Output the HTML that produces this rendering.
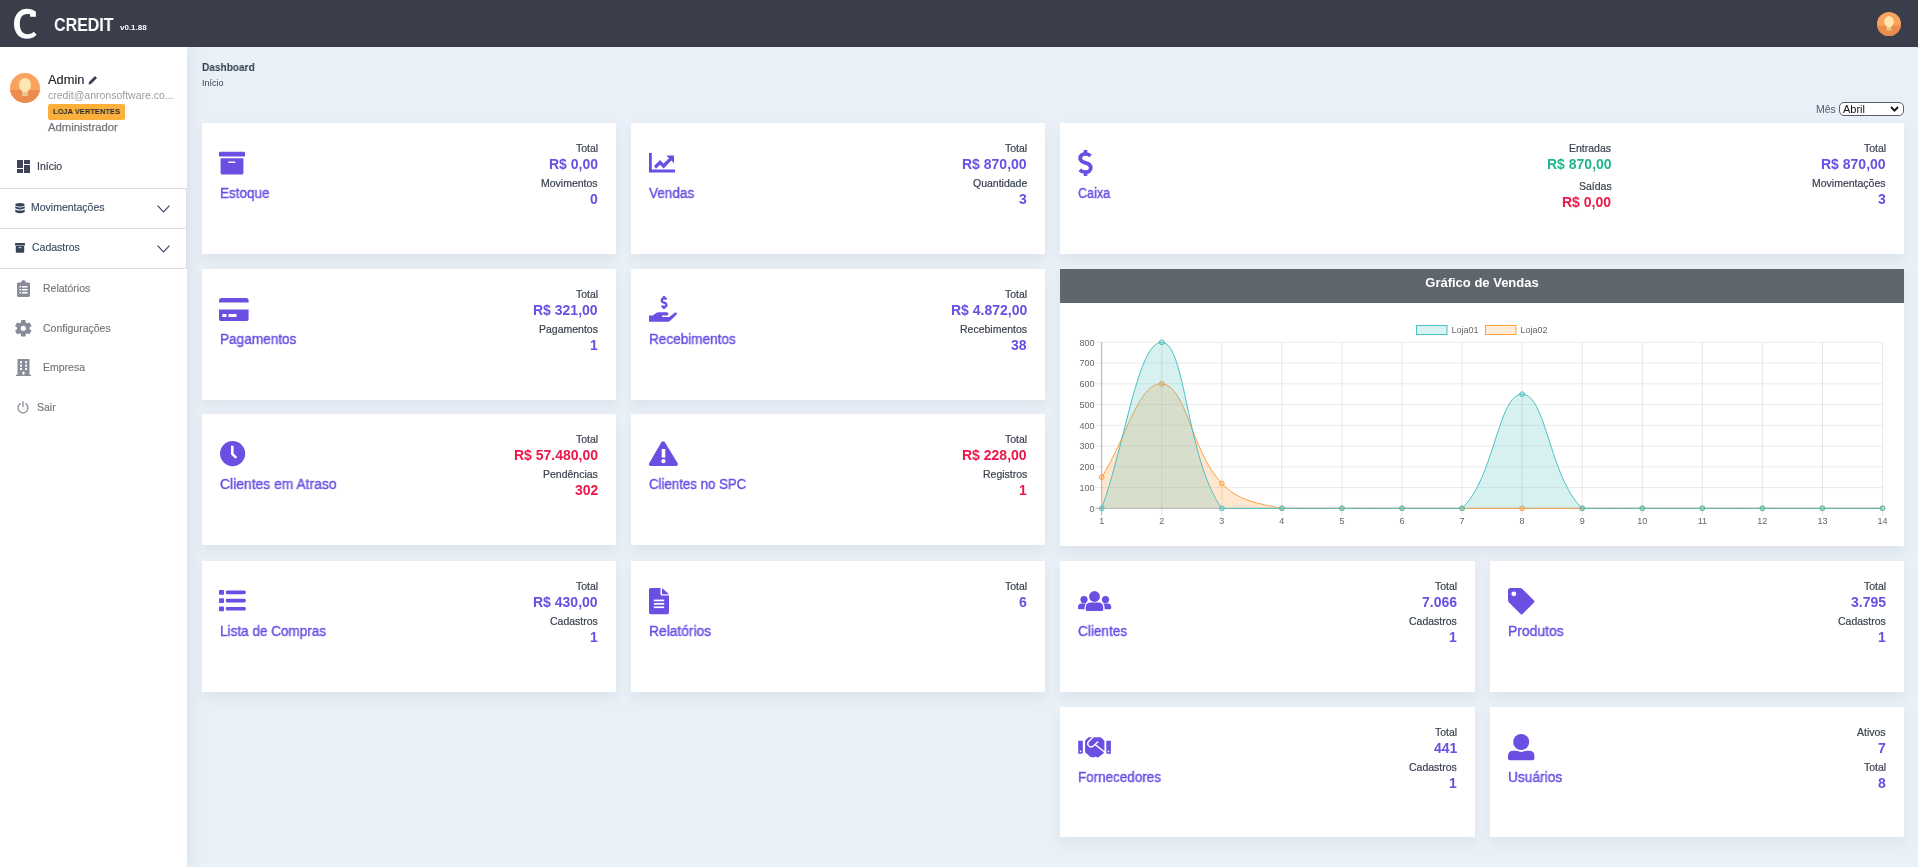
<!DOCTYPE html>
<html><head><meta charset="utf-8"><title>Credit</title><style>
*{margin:0;padding:0;box-sizing:border-box}
html,body{width:1918px;height:867px;overflow:hidden;background:#e9f0f7;font-family:"Liberation Sans",sans-serif}
.t{position:absolute;white-space:nowrap;will-change:transform}
.abs{position:absolute}
.hdr{position:absolute;left:0;top:0;width:1918px;height:47px;background:#3a3e4b}
.side{position:absolute;left:0;top:47px;width:187px;height:820px;background:#fff;box-shadow:2px 0 14px rgba(50,65,85,0.09)}
.card{position:absolute;background:#fff;box-shadow:0 6px 12px rgba(50,70,100,0.07)}
svg{position:absolute;overflow:visible}
</style></head><body>
<div class="hdr"></div>
<svg style="left:0;top:0" width="48" height="47" viewBox="0 0 48 47"><path d="M35.9 11.8 C33.6 9.8 30.6 8.8 27 8.8 C19.2 8.8 14 15 14 23.8 C14 32.8 19.2 38.8 27 38.8 C31 38.8 34.2 37.3 36.6 34.7 L33.8 31.7 C31.8 33.5 29.8 34.2 27.2 34.2 C22.4 34.2 19.8 29.8 19.8 23.8 C19.8 17.6 22.4 13.9 27 13.9 C28.4 13.9 29.3 14 30.1 14.3 L30.1 16.7 L35.9 16.7 Z" fill="#fff"/></svg>
<div class="t" style="left:54px;top:14.92px;font-size:19px;line-height:19px;color:#fff;font-weight:700;transform:scaleX(0.842);transform-origin:0 0;">CREDIT</div>
<div class="t" style="left:120px;top:24.23px;font-size:8px;line-height:8px;color:#fff;font-weight:700;">v0.1.88</div>
<svg style="left:1877px;top:11.5px" width="24" height="24" viewBox="0 0 30 30"><defs><clipPath id="cc1889"><circle cx="15" cy="15" r="15"/></clipPath></defs><g clip-path="url(#cc1889)"><rect width="30" height="30" fill="#f9a35e"/><rect y="17" width="30" height="13" fill="#ec8b4e"/><rect x="12" y="15" width="6" height="8" fill="#e8c98a"/><ellipse cx="15" cy="12" rx="6" ry="7" fill="#fde6b0"/></g></svg>
<div class="side"></div>
<svg style="left:10px;top:73px" width="30" height="30" viewBox="0 0 30 30"><defs><clipPath id="cc25"><circle cx="15" cy="15" r="15"/></clipPath></defs><g clip-path="url(#cc25)"><rect width="30" height="30" fill="#f9a35e"/><rect y="17" width="30" height="13" fill="#ec8b4e"/><rect x="12" y="15" width="6" height="8" fill="#e8c98a"/><ellipse cx="15" cy="12" rx="6" ry="7" fill="#fde6b0"/></g></svg>
<div class="t" style="left:48px;top:74.34px;font-size:12px;line-height:12px;color:#23252e;font-weight:400;transform:scaleX(1.07);transform-origin:0 0;-webkit-text-stroke:0.15px #23252e;">Admin</div>
<svg style="left:88px;top:75px" width="10" height="10" viewBox="0 0 10 10"><path d="M0.5 9.5 L1 7 L7 1 L9 3 L3 9 Z" fill="#3b4154"/></svg>
<div class="t" style="left:48px;top:90.11px;font-size:10.5px;line-height:10.5px;color:#9b9ca3;font-weight:400;">credit@anronsoftware.co...</div>
<div class="abs" style="left:48px;top:104px;width:77px;height:16px;background:#fbb03b;border-radius:2px"></div>
<div class="t" style="left:53px;top:108.23px;font-size:8px;line-height:8px;color:#262a36;font-weight:700;transform:scaleX(0.94);transform-origin:0 0;">LOJA VERTENTES</div>
<div class="t" style="left:48px;top:121.69px;font-size:11px;line-height:11px;color:#75767e;font-weight:400;-webkit-text-stroke:0.25px #75767e;transform:scaleX(1.03);transform-origin:0 0;">Administrador</div>
<svg style="left:17px;top:160px" width="13" height="13" viewBox="0 0 13 13"><rect x="0" y="0" width="6" height="8" fill="#3f4458"/><rect x="0" y="9" width="6" height="4" fill="#3f4458"/><rect x="7" y="0" width="6" height="4" fill="#3f4458"/><rect x="7" y="5" width="6" height="8" fill="#3f4458"/></svg>
<div class="t" style="left:37px;top:161.11px;font-size:10.5px;line-height:10.5px;color:#333848;font-weight:400;-webkit-text-stroke:0.15px #333848;">Início</div>
<div class="abs" style="left:0;top:188px;width:187px;height:1px;background:#dedede"></div>
<div class="abs" style="left:0;top:228px;width:187px;height:1px;background:#dedede"></div>
<div class="abs" style="left:0;top:268px;width:187px;height:1px;background:#dedede"></div>
<div class="abs" style="left:186px;top:188px;width:1px;height:81px;background:#dedede"></div>
<svg style="left:15px;top:202.5px" width="10" height="11" viewBox="0 0 10 11"><ellipse cx="5" cy="1.8" rx="4.7" ry="1.8" fill="#344356"/><path d="M0.3 3.2 Q5 5.6 9.7 3.2 V5.2 Q5 7.6 0.3 5.2Z" fill="#344356"/><path d="M0.3 6.4 Q5 8.8 9.7 6.4 V8.9 Q5 11.6 0.3 8.9Z" fill="#344356"/></svg>
<div class="t" style="left:30.5px;top:202.11px;font-size:10.5px;line-height:10.5px;color:#3c4b60;font-weight:400;-webkit-text-stroke:0.15px #3c4b60;">Movimentações</div>
<svg style="left:157px;top:204.8px" width="13" height="8" viewBox="0 0 13 8"><path d="M0.6 0.6 L6.5 6.8 L12.4 0.6" fill="none" stroke="#3c4b60" stroke-width="1.2"/></svg>
<svg style="left:15px;top:243px" width="10" height="10" viewBox="0 0 10 10"><rect x="0" y="0" width="10" height="2.4" rx="0.4" fill="#344356"/><path d="M0.8 3 H9.2 V9 Q9.2 9.8 8.4 9.8 H1.6 Q0.8 9.8 0.8 9 Z" fill="#344356"/><rect x="3.6" y="4.3" width="2.8" height="0.8" fill="#fff"/></svg>
<div class="t" style="left:32px;top:242.11px;font-size:10.5px;line-height:10.5px;color:#3c4b60;font-weight:400;-webkit-text-stroke:0.15px #3c4b60;">Cadastros</div>
<svg style="left:157px;top:244.8px" width="13" height="8" viewBox="0 0 13 8"><path d="M0.6 0.6 L6.5 6.8 L12.4 0.6" fill="none" stroke="#3c4b60" stroke-width="1.2"/></svg>
<svg style="left:17px;top:280px" width="13" height="17" viewBox="0 0 13 17"><path d="M1.5 2.5 H4 Q4.5 0 6.5 0 Q8.5 0 9 2.5 H11.5 Q13 2.5 13 4 V15.5 Q13 17 11.5 17 H1.5 Q0 17 0 15.5 V4 Q0 2.5 1.5 2.5Z" fill="#898c98"/><g fill="#fff"><rect x="2.5" y="6" width="1.5" height="1.5"/><rect x="5" y="6" width="5.5" height="1.5"/><rect x="2.5" y="9" width="1.5" height="1.5"/><rect x="5" y="9" width="5.5" height="1.5"/><rect x="2.5" y="12" width="1.5" height="1.5"/><rect x="5" y="12" width="5.5" height="1.5"/></g></svg>
<div class="t" style="left:43px;top:283.11px;font-size:10.5px;line-height:10.5px;color:#737579;font-weight:400;-webkit-text-stroke:0.15px #737579;">Relatórios</div>
<svg style="left:15.1px;top:320.2px" width="17" height="17" viewBox="0 0 17 17"><g fill="#898c98"><circle cx="8.3" cy="8.3" r="6.3"/><rect x="6" y="0" width="4.6" height="5" rx="0.6" transform="rotate(0 8.3 8.3)"/><rect x="6" y="0" width="4.6" height="5" rx="0.6" transform="rotate(60 8.3 8.3)"/><rect x="6" y="0" width="4.6" height="5" rx="0.6" transform="rotate(120 8.3 8.3)"/><rect x="6" y="0" width="4.6" height="5" rx="0.6" transform="rotate(180 8.3 8.3)"/><rect x="6" y="0" width="4.6" height="5" rx="0.6" transform="rotate(240 8.3 8.3)"/><rect x="6" y="0" width="4.6" height="5" rx="0.6" transform="rotate(300 8.3 8.3)"/></g><circle cx="8.3" cy="8.3" r="2.6" fill="#fff"/></svg>
<div class="t" style="left:43px;top:323.11px;font-size:10.5px;line-height:10.5px;color:#737579;font-weight:400;-webkit-text-stroke:0.15px #737579;">Configurações</div>
<svg style="left:16px;top:359px" width="15" height="17" viewBox="0 0 15 17"><rect x="1.5" y="0" width="12" height="16" fill="#898c98"/><rect x="0" y="15.6" width="15" height="1.4" fill="#898c98"/><g fill="#fff"><rect x="4" y="2.2" width="2" height="2"/><rect x="9" y="2.2" width="2" height="2"/><rect x="4" y="5.6" width="2" height="2"/><rect x="9" y="5.6" width="2" height="2"/><rect x="4" y="9" width="2" height="2"/><rect x="9" y="9" width="2" height="2"/><rect x="6.5" y="12.6" width="2" height="3"/></g></svg>
<div class="t" style="left:43px;top:362.11px;font-size:10.5px;line-height:10.5px;color:#737579;font-weight:400;-webkit-text-stroke:0.15px #737579;">Empresa</div>
<svg style="left:17px;top:401px" width="12" height="12" viewBox="0 0 12 12"><path d="M3.3 2.6 A5 5 0 1 0 8.7 2.6" fill="none" stroke="#898c98" stroke-width="1.3" stroke-linecap="round"/><line x1="6" y1="0.7" x2="6" y2="5.6" stroke="#898c98" stroke-width="1.3" stroke-linecap="round"/></svg>
<div class="t" style="left:37px;top:402.11px;font-size:10.5px;line-height:10.5px;color:#737579;font-weight:400;-webkit-text-stroke:0.15px #737579;">Sair</div>
<div class="t" style="left:202px;top:62.11px;font-size:10.5px;line-height:10.5px;color:#2f3d4f;font-weight:700;transform:scaleX(0.96);transform-origin:0 0;">Dashboard</div>
<div class="t" style="left:202px;top:79.38px;font-size:9px;line-height:9px;color:#3b3f4e;font-weight:400;">Início</div>
<div class="t" style="right:82px;text-align:right;top:103.81px;font-size:10.5px;line-height:10.5px;color:#4d5b70;font-weight:400;">Mês</div>
<div class="abs" style="left:1839px;top:102px;width:65px;height:14px;border:1px solid #56606b;border-radius:5px;background:#fff"></div>
<div class="t" style="left:1843px;top:103.69px;font-size:11px;line-height:11px;color:#111;font-weight:400;">Abril</div>
<svg style="left:1890px;top:106px" width="9" height="6" viewBox="0 0 9 6"><path d="M1 1 L4.5 4.6 L8 1" fill="none" stroke="#111" stroke-width="1.8"/></svg>
<div class="card" style="left:202px;top:123px;width:414px;height:130.5px"></div>
<svg style="left:219.3px;top:151px" width="27" height="24" viewBox="0 0 27 24"><rect x="0" y="0.8" width="26" height="4.8" rx="1.2" fill="#6a4fe2"/><path d="M1.6 7.2 H24.4 V22 Q24.4 23.6 22.8 23.6 H3.2 Q1.6 23.6 1.6 22 Z" fill="#6a4fe2"/><rect x="9.2" y="10.5" width="7.2" height="1.5" rx="0.7" fill="#fff"/></svg>
<div class="t" style="left:220px;top:186.35px;font-size:14px;line-height:14px;color:#6a4fe2;font-weight:400;-webkit-text-stroke:0.4px #6a4fe2;transform:scaleX(0.9643);transform-origin:0 0;">Estoque</div>
<div class="t" style="right:1320px;text-align:right;top:143.11px;font-size:10.5px;line-height:10.5px;color:#3a4150;font-weight:400;-webkit-text-stroke:0.2px #3a4150;">Total</div>
<div class="t" style="right:1320px;text-align:right;top:156.85px;font-size:14px;line-height:14px;color:#6a4fe2;font-weight:700;">R$ 0,00</div>
<div class="t" style="right:1320px;text-align:right;top:177.51px;font-size:10.5px;line-height:10.5px;color:#3a4150;font-weight:400;-webkit-text-stroke:0.2px #3a4150;">Movimentos</div>
<div class="t" style="right:1320px;text-align:right;top:191.65px;font-size:14px;line-height:14px;color:#6a4fe2;font-weight:700;">0</div>
<div class="card" style="left:631px;top:123px;width:414px;height:130.5px"></div>
<svg style="left:649px;top:153px" width="26" height="20" viewBox="0 0 26 20"><path d="M0 0 H2.8 V16.6 H26 V19.4 H0 Z" fill="#6a4fe2"/><path d="M5 13 L11 7 L14.6 10.6 L20 5.2 L17.4 2.6 H25 V10.2 L22.4 7.6 L14.6 15.4 L11 11.8 L7 15.8 Z" fill="#6a4fe2"/></svg>
<div class="t" style="left:649px;top:186.35px;font-size:14px;line-height:14px;color:#6a4fe2;font-weight:400;-webkit-text-stroke:0.4px #6a4fe2;transform:scaleX(0.9662);transform-origin:0 0;">Vendas</div>
<div class="t" style="right:891px;text-align:right;top:143.11px;font-size:10.5px;line-height:10.5px;color:#3a4150;font-weight:400;-webkit-text-stroke:0.2px #3a4150;">Total</div>
<div class="t" style="right:891px;text-align:right;top:156.85px;font-size:14px;line-height:14px;color:#6a4fe2;font-weight:700;">R$ 870,00</div>
<div class="t" style="right:891px;text-align:right;top:177.51px;font-size:10.5px;line-height:10.5px;color:#3a4150;font-weight:400;-webkit-text-stroke:0.2px #3a4150;">Quantidade</div>
<div class="t" style="right:891px;text-align:right;top:191.65px;font-size:14px;line-height:14px;color:#6a4fe2;font-weight:700;">3</div>
<div class="card" style="left:202px;top:269px;width:414px;height:130.5px"></div>
<svg style="left:219.3px;top:297.6px" width="30" height="23" viewBox="0 0 30 23"><path d="M0 2.5 Q0 0 2.5 0 H27 Q29.6 0 29.6 2.5 V4.6 H0 Z" fill="#6a4fe2"/><path d="M0 11.5 H29.6 V20.4 Q29.6 23 27 23 H2.5 Q0 23 0 20.4 Z" fill="#6a4fe2"/><g fill="#fff"><rect x="3.3" y="16" width="4.2" height="3" rx="0.5"/><rect x="9.5" y="16" width="8" height="3" rx="0.5"/></g></svg>
<div class="t" style="left:220px;top:332.35px;font-size:14px;line-height:14px;color:#6a4fe2;font-weight:400;-webkit-text-stroke:0.4px #6a4fe2;transform:scaleX(0.9720);transform-origin:0 0;">Pagamentos</div>
<div class="t" style="right:1320px;text-align:right;top:289.11px;font-size:10.5px;line-height:10.5px;color:#3a4150;font-weight:400;-webkit-text-stroke:0.2px #3a4150;">Total</div>
<div class="t" style="right:1320px;text-align:right;top:302.85px;font-size:14px;line-height:14px;color:#6a4fe2;font-weight:700;">R$ 321,00</div>
<div class="t" style="right:1320px;text-align:right;top:323.51px;font-size:10.5px;line-height:10.5px;color:#3a4150;font-weight:400;-webkit-text-stroke:0.2px #3a4150;">Pagamentos</div>
<div class="t" style="right:1320px;text-align:right;top:337.65px;font-size:14px;line-height:14px;color:#6a4fe2;font-weight:700;">1</div>
<div class="card" style="left:631px;top:269px;width:414px;height:130.5px"></div>
<svg style="left:649px;top:296px" width="28" height="26" viewBox="0 0 28 26"><path d="M0 19.6 H3.8 L6.8 17.2 Q8 16.2 9.8 16.2 H17.8 Q19.4 16.2 19.4 17.8 Q19.4 19.4 17.8 19.4 H13.4 Q12.2 19.4 13 20.4 Q13.4 21 14.4 21 H20.4 L25.6 16.8 Q26.8 16 27.6 16.8 Q28.4 17.8 27.4 18.8 L21.2 24.8 Q20.2 25.8 19 25.8 H0 Z" fill="#6a4fe2"/><path d="M17.6 3.3 Q16.8 2.4 15.2 2.4 Q12.8 2.4 12.8 4.4 Q12.8 6 15 6.6 Q17.4 7.2 17.4 9 Q17.4 10.8 15 10.8 Q13.6 10.8 12.6 10" fill="none" stroke="#6a4fe2" stroke-width="2.3"/><rect x="13.9" y="0" width="2.2" height="2.6" fill="#6a4fe2"/><rect x="13.9" y="10.4" width="2.2" height="2.6" fill="#6a4fe2"/></svg>
<div class="t" style="left:649px;top:332.35px;font-size:14px;line-height:14px;color:#6a4fe2;font-weight:400;-webkit-text-stroke:0.4px #6a4fe2;transform:scaleX(0.9691);transform-origin:0 0;">Recebimentos</div>
<div class="t" style="right:891px;text-align:right;top:289.11px;font-size:10.5px;line-height:10.5px;color:#3a4150;font-weight:400;-webkit-text-stroke:0.2px #3a4150;">Total</div>
<div class="t" style="right:891px;text-align:right;top:302.85px;font-size:14px;line-height:14px;color:#6a4fe2;font-weight:700;">R$ 4.872,00</div>
<div class="t" style="right:891px;text-align:right;top:323.51px;font-size:10.5px;line-height:10.5px;color:#3a4150;font-weight:400;-webkit-text-stroke:0.2px #3a4150;">Recebimentos</div>
<div class="t" style="right:891px;text-align:right;top:337.65px;font-size:14px;line-height:14px;color:#6a4fe2;font-weight:700;">38</div>
<div class="card" style="left:202px;top:414px;width:414px;height:130.5px"></div>
<svg style="left:219.8px;top:441.2px" width="26" height="26" viewBox="0 0 26 26"><circle cx="12.6" cy="12.6" r="12.6" fill="#6a4fe2"/><path d="M11 4.8 H13.6 V12.6 L17.2 16 L15.4 17.8 L11 13.6 Z" fill="#fff"/></svg>
<div class="t" style="left:220px;top:477.35px;font-size:14px;line-height:14px;color:#6a4fe2;font-weight:400;-webkit-text-stroke:0.4px #6a4fe2;transform:scaleX(0.9922);transform-origin:0 0;">Clientes em Atraso</div>
<div class="t" style="right:1320px;text-align:right;top:434.11px;font-size:10.5px;line-height:10.5px;color:#3a4150;font-weight:400;-webkit-text-stroke:0.2px #3a4150;">Total</div>
<div class="t" style="right:1320px;text-align:right;top:447.85px;font-size:14px;line-height:14px;color:#ec1849;font-weight:700;">R$ 57.480,00</div>
<div class="t" style="right:1320px;text-align:right;top:468.51px;font-size:10.5px;line-height:10.5px;color:#3a4150;font-weight:400;-webkit-text-stroke:0.2px #3a4150;">Pendências</div>
<div class="t" style="right:1320px;text-align:right;top:482.65px;font-size:14px;line-height:14px;color:#ec1849;font-weight:700;">302</div>
<div class="card" style="left:631px;top:414px;width:414px;height:130.5px"></div>
<svg style="left:649px;top:441px" width="30" height="26" viewBox="0 0 30 26"><path d="M14.7 0.6 Q15.3 0 16 0.6 L29.4 22.6 Q30 24.8 28 25 H2.2 Q0 24.8 0.6 22.6 L13.4 0.6 Z" fill="#6a4fe2" transform="translate(-0.6 0)"/><rect x="12.7" y="8" width="3.6" height="8.5" rx="0.5" fill="#fff"/><circle cx="14.5" cy="20.2" r="2.1" fill="#fff"/></svg>
<div class="t" style="left:649px;top:477.35px;font-size:14px;line-height:14px;color:#6a4fe2;font-weight:400;-webkit-text-stroke:0.4px #6a4fe2;transform:scaleX(0.9469);transform-origin:0 0;">Clientes no SPC</div>
<div class="t" style="right:891px;text-align:right;top:434.11px;font-size:10.5px;line-height:10.5px;color:#3a4150;font-weight:400;-webkit-text-stroke:0.2px #3a4150;">Total</div>
<div class="t" style="right:891px;text-align:right;top:447.85px;font-size:14px;line-height:14px;color:#ec1849;font-weight:700;">R$ 228,00</div>
<div class="t" style="right:891px;text-align:right;top:468.51px;font-size:10.5px;line-height:10.5px;color:#3a4150;font-weight:400;-webkit-text-stroke:0.2px #3a4150;">Registros</div>
<div class="t" style="right:891px;text-align:right;top:482.65px;font-size:14px;line-height:14px;color:#ec1849;font-weight:700;">1</div>
<div class="card" style="left:202px;top:561px;width:414px;height:130.5px"></div>
<svg style="left:219px;top:590px" width="27" height="22" viewBox="0 0 27 22"><g fill="#6a4fe2"><rect x="0" y="0" width="5" height="4.8" rx="0.8"/><rect x="6.8" y="0.6" width="20" height="3.6" rx="1.4"/><rect x="0" y="8.2" width="5" height="4.8" rx="0.8"/><rect x="6.8" y="8.8" width="20" height="3.6" rx="1.4"/><rect x="0" y="16.4" width="5" height="4.8" rx="0.8"/><rect x="6.8" y="17" width="20" height="3.6" rx="1.4"/></g></svg>
<div class="t" style="left:220px;top:624.35px;font-size:14px;line-height:14px;color:#6a4fe2;font-weight:400;-webkit-text-stroke:0.4px #6a4fe2;transform:scaleX(0.9662);transform-origin:0 0;">Lista de Compras</div>
<div class="t" style="right:1320px;text-align:right;top:581.11px;font-size:10.5px;line-height:10.5px;color:#3a4150;font-weight:400;-webkit-text-stroke:0.2px #3a4150;">Total</div>
<div class="t" style="right:1320px;text-align:right;top:594.85px;font-size:14px;line-height:14px;color:#6a4fe2;font-weight:700;">R$ 430,00</div>
<div class="t" style="right:1320px;text-align:right;top:615.51px;font-size:10.5px;line-height:10.5px;color:#3a4150;font-weight:400;-webkit-text-stroke:0.2px #3a4150;">Cadastros</div>
<div class="t" style="right:1320px;text-align:right;top:629.65px;font-size:14px;line-height:14px;color:#6a4fe2;font-weight:700;">1</div>
<div class="card" style="left:631px;top:561px;width:414px;height:130.5px"></div>
<svg style="left:649px;top:588px" width="21" height="27" viewBox="0 0 21 27"><path d="M1.5 0 H11.5 V6.6 Q11.5 7.4 12.3 7.4 H20 V24.6 Q20 26.2 18.4 26.2 H1.5 Q0 26.2 0 24.6 V1.5 Q0 0 1.5 0 Z" fill="#6a4fe2"/><path d="M13 0 L20 6.2 H13 Z" fill="#6a4fe2"/><g fill="#fff"><rect x="4.8" y="11.6" width="10.4" height="1.7"/><rect x="4.8" y="15" width="10.4" height="1.7"/><rect x="4.8" y="18.4" width="10.4" height="1.7"/></g></svg>
<div class="t" style="left:649px;top:624.35px;font-size:14px;line-height:14px;color:#6a4fe2;font-weight:400;-webkit-text-stroke:0.4px #6a4fe2;transform:scaleX(0.9855);transform-origin:0 0;">Relatórios</div>
<div class="t" style="right:891px;text-align:right;top:581.11px;font-size:10.5px;line-height:10.5px;color:#3a4150;font-weight:400;-webkit-text-stroke:0.2px #3a4150;">Total</div>
<div class="t" style="right:891px;text-align:right;top:594.85px;font-size:14px;line-height:14px;color:#6a4fe2;font-weight:700;">6</div>
<div class="card" style="left:1060px;top:561px;width:415px;height:130.5px"></div>
<svg style="left:1078px;top:591px" width="34" height="21" viewBox="0 0 34 21"><g fill="#6a4fe2"><circle cx="16.5" cy="5.5" r="5.4"/><circle cx="6" cy="8.6" r="3.6"/><circle cx="27.5" cy="8.6" r="3.6"/><path d="M7.8 16.2 Q7.8 11.5 12.8 11.5 H20.2 Q25.2 11.5 25.2 16.2 V18.8 Q25.2 20.1 23.8 20.1 H9.2 Q7.8 20.1 7.8 18.8 Z"/><path d="M0 16 Q0 12.4 3.6 12.4 H8 Q6.6 14 6.6 16.5 V18.2 H1.2 Q0 18.2 0 17 Z"/><path d="M33.2 16 Q33.2 12.4 29.6 12.4 H25.2 Q26.6 14 26.6 16.5 V18.2 H32 Q33.2 18.2 33.2 17 Z"/></g></svg>
<div class="t" style="left:1078px;top:624.35px;font-size:14px;line-height:14px;color:#6a4fe2;font-weight:400;-webkit-text-stroke:0.4px #6a4fe2;transform:scaleX(0.9720);transform-origin:0 0;">Clientes</div>
<div class="t" style="right:461px;text-align:right;top:581.11px;font-size:10.5px;line-height:10.5px;color:#3a4150;font-weight:400;-webkit-text-stroke:0.2px #3a4150;">Total</div>
<div class="t" style="right:461px;text-align:right;top:594.85px;font-size:14px;line-height:14px;color:#6a4fe2;font-weight:700;">7.066</div>
<div class="t" style="right:461px;text-align:right;top:615.51px;font-size:10.5px;line-height:10.5px;color:#3a4150;font-weight:400;-webkit-text-stroke:0.2px #3a4150;">Cadastros</div>
<div class="t" style="right:461px;text-align:right;top:629.65px;font-size:14px;line-height:14px;color:#6a4fe2;font-weight:700;">1</div>
<div class="card" style="left:1490px;top:561px;width:414px;height:130.5px"></div>
<svg style="left:1507.5px;top:588px" width="27" height="27" viewBox="0 0 27 27"><path d="M0 2.6 Q0 0 2.6 0 H12 Q13.4 0 14.4 1 L26 12.6 Q27 13.6 26 14.6 L14.6 26 Q13.6 27 12.6 26 L1 14.4 Q0 13.4 0 12 Z" fill="#6a4fe2"/><circle cx="5.8" cy="5.8" r="2.4" fill="#fff"/></svg>
<div class="t" style="left:1508px;top:624.35px;font-size:14px;line-height:14px;color:#6a4fe2;font-weight:400;-webkit-text-stroke:0.4px #6a4fe2;transform:scaleX(0.9932);transform-origin:0 0;">Produtos</div>
<div class="t" style="right:32px;text-align:right;top:581.11px;font-size:10.5px;line-height:10.5px;color:#3a4150;font-weight:400;-webkit-text-stroke:0.2px #3a4150;">Total</div>
<div class="t" style="right:32px;text-align:right;top:594.85px;font-size:14px;line-height:14px;color:#6a4fe2;font-weight:700;">3.795</div>
<div class="t" style="right:32px;text-align:right;top:615.51px;font-size:10.5px;line-height:10.5px;color:#3a4150;font-weight:400;-webkit-text-stroke:0.2px #3a4150;">Cadastros</div>
<div class="t" style="right:32px;text-align:right;top:629.65px;font-size:14px;line-height:14px;color:#6a4fe2;font-weight:700;">1</div>
<div class="card" style="left:1060px;top:707px;width:415px;height:130px"></div>
<svg style="left:1078px;top:736.8px" width="34" height="22" viewBox="0 0 34 22"><g fill="#6a4fe2"><path d="M0.2 3.7 H4.8 V15.6 Q4.8 16.8 3.6 16.8 H0.2 Z"/><path d="M32.9 3.7 H28.3 V15.6 Q28.3 16.8 29.5 16.8 H32.9 Z"/><path d="M7.1 3.4 L10.6 0.3 H22.7 L26.4 3.8 V13.4 L25.6 16.2 L24 17.4 L22.4 18.8 L20.6 20.2 H18.6 L17.6 19.6 L16.6 20.2 H12.8 L7.1 15.2 Z"/></g><g fill="none" stroke="#fff" stroke-width="1.4"><path d="M15.2 0 L10.8 4.2 Q8.8 6.4 10.4 8.6 Q12.4 10.8 14.8 9.4 L20.2 4.4"/><path d="M17.2 7.6 L26.6 15"/></g><g fill="#fff"><circle cx="2.6" cy="14.3" r="0.9"/><circle cx="30.5" cy="14.3" r="0.9"/></g></svg>
<div class="t" style="left:1078px;top:770.35px;font-size:14px;line-height:14px;color:#6a4fe2;font-weight:400;-webkit-text-stroke:0.4px #6a4fe2;transform:scaleX(0.9595);transform-origin:0 0;">Fornecedores</div>
<div class="t" style="right:461px;text-align:right;top:727.11px;font-size:10.5px;line-height:10.5px;color:#3a4150;font-weight:400;-webkit-text-stroke:0.2px #3a4150;">Total</div>
<div class="t" style="right:461px;text-align:right;top:740.85px;font-size:14px;line-height:14px;color:#6a4fe2;font-weight:700;">441</div>
<div class="t" style="right:461px;text-align:right;top:761.51px;font-size:10.5px;line-height:10.5px;color:#3a4150;font-weight:400;-webkit-text-stroke:0.2px #3a4150;">Cadastros</div>
<div class="t" style="right:461px;text-align:right;top:775.65px;font-size:14px;line-height:14px;color:#6a4fe2;font-weight:700;">1</div>
<div class="card" style="left:1490px;top:707px;width:414px;height:130px"></div>
<svg style="left:1507.5px;top:734px" width="27" height="26" viewBox="0 0 27 26"><path d="M0 22.2 Q0 16.8 5.4 16.8 H21 Q26.4 16.8 26.4 22.2 V24.4 Q26.4 26.2 24.6 26.2 H1.8 Q0 26.2 0 24.4 Z" fill="#6a4fe2"/><circle cx="13.2" cy="8" r="9.9" fill="#fff"/><circle cx="13.2" cy="8" r="8" fill="#6a4fe2"/></svg>
<div class="t" style="left:1508px;top:770.35px;font-size:14px;line-height:14px;color:#6a4fe2;font-weight:400;-webkit-text-stroke:0.4px #6a4fe2;transform:scaleX(0.9807);transform-origin:0 0;">Usuários</div>
<div class="t" style="right:32px;text-align:right;top:727.11px;font-size:10.5px;line-height:10.5px;color:#3a4150;font-weight:400;-webkit-text-stroke:0.2px #3a4150;">Ativos</div>
<div class="t" style="right:32px;text-align:right;top:740.85px;font-size:14px;line-height:14px;color:#6a4fe2;font-weight:700;">7</div>
<div class="t" style="right:32px;text-align:right;top:761.51px;font-size:10.5px;line-height:10.5px;color:#3a4150;font-weight:400;-webkit-text-stroke:0.2px #3a4150;">Total</div>
<div class="t" style="right:32px;text-align:right;top:775.65px;font-size:14px;line-height:14px;color:#6a4fe2;font-weight:700;">8</div>
<div class="card" style="left:1060px;top:123px;width:844px;height:130.5px"></div>
<svg style="left:1078px;top:150px" width="15" height="26" viewBox="0 0 15 26"><path d="M12.6 5.8 C11 4.3 9.5 3.8 7.5 3.8 C4.4 3.8 2.2 5.6 2.2 8.2 C2.2 11 4.6 12 7.5 12.8 C10.5 13.6 12.8 14.8 12.8 17.8 C12.8 20.4 10.5 22.2 7.5 22.2 C5.2 22.2 3.6 21.6 1.8 19.8" fill="none" stroke="#6a4fe2" stroke-width="3.8"/><rect x="5.7" y="0" width="3.6" height="4" fill="#6a4fe2"/><rect x="5.7" y="22" width="3.6" height="4" fill="#6a4fe2"/></svg>
<div class="t" style="left:1078px;top:186.35px;font-size:14px;line-height:14px;color:#6a4fe2;font-weight:400;-webkit-text-stroke:0.4px #6a4fe2;transform:scaleX(0.900);transform-origin:0 0;">Caixa</div>
<div class="t" style="right:306.5px;text-align:right;top:143.11px;font-size:10.5px;line-height:10.5px;color:#3a4150;font-weight:400;-webkit-text-stroke:0.2px #3a4150;">Entradas</div>
<div class="t" style="right:306.5px;text-align:right;top:156.85px;font-size:14px;line-height:14px;color:#22b591;font-weight:700;">R$ 870,00</div>
<div class="t" style="right:306.5px;text-align:right;top:181.11px;font-size:10.5px;line-height:10.5px;color:#3a4150;font-weight:400;-webkit-text-stroke:0.2px #3a4150;">Saídas</div>
<div class="t" style="right:306.5px;text-align:right;top:194.65px;font-size:14px;line-height:14px;color:#ec1849;font-weight:700;">R$ 0,00</div>
<div class="t" style="right:32px;text-align:right;top:143.11px;font-size:10.5px;line-height:10.5px;color:#3a4150;font-weight:400;-webkit-text-stroke:0.2px #3a4150;">Total</div>
<div class="t" style="right:32px;text-align:right;top:156.85px;font-size:14px;line-height:14px;color:#6a4fe2;font-weight:700;">R$ 870,00</div>
<div class="t" style="right:32px;text-align:right;top:178.11px;font-size:10.5px;line-height:10.5px;color:#3a4150;font-weight:400;-webkit-text-stroke:0.2px #3a4150;">Movimentações</div>
<div class="t" style="right:32px;text-align:right;top:191.65px;font-size:14px;line-height:14px;color:#6a4fe2;font-weight:700;">3</div>
<div class="card" style="left:1060px;top:269px;width:844px;height:277px"></div>
<div class="abs" style="left:1060px;top:269px;width:844px;height:34px;background:#5f666e"></div>
<div class="t" style="left:1182px;width:600px;text-align:center;top:275.60px;font-size:13px;line-height:13px;color:#fff;font-weight:700;">Gráfico de Vendas</div>
<svg style="left:0;top:0" width="1918" height="867" viewBox="0 0 1918 867"><line x1="1095.2" y1="508.30" x2="1882.5" y2="508.30" stroke="rgba(0,0,0,0.08)" stroke-width="1"/><line x1="1095.2" y1="487.55" x2="1882.5" y2="487.55" stroke="rgba(0,0,0,0.08)" stroke-width="1"/><line x1="1095.2" y1="466.80" x2="1882.5" y2="466.80" stroke="rgba(0,0,0,0.08)" stroke-width="1"/><line x1="1095.2" y1="446.05" x2="1882.5" y2="446.05" stroke="rgba(0,0,0,0.08)" stroke-width="1"/><line x1="1095.2" y1="425.30" x2="1882.5" y2="425.30" stroke="rgba(0,0,0,0.08)" stroke-width="1"/><line x1="1095.2" y1="404.55" x2="1882.5" y2="404.55" stroke="rgba(0,0,0,0.08)" stroke-width="1"/><line x1="1095.2" y1="383.80" x2="1882.5" y2="383.80" stroke="rgba(0,0,0,0.08)" stroke-width="1"/><line x1="1095.2" y1="363.05" x2="1882.5" y2="363.05" stroke="rgba(0,0,0,0.08)" stroke-width="1"/><line x1="1095.2" y1="342.30" x2="1882.5" y2="342.30" stroke="rgba(0,0,0,0.08)" stroke-width="1"/><line x1="1101.70" y1="342.3" x2="1101.70" y2="515.3" stroke="rgba(0,0,0,0.1)" stroke-width="1"/><line x1="1161.76" y1="342.3" x2="1161.76" y2="515.3" stroke="rgba(0,0,0,0.1)" stroke-width="1"/><line x1="1221.82" y1="342.3" x2="1221.82" y2="515.3" stroke="rgba(0,0,0,0.1)" stroke-width="1"/><line x1="1281.88" y1="342.3" x2="1281.88" y2="515.3" stroke="rgba(0,0,0,0.1)" stroke-width="1"/><line x1="1341.94" y1="342.3" x2="1341.94" y2="515.3" stroke="rgba(0,0,0,0.1)" stroke-width="1"/><line x1="1402.00" y1="342.3" x2="1402.00" y2="515.3" stroke="rgba(0,0,0,0.1)" stroke-width="1"/><line x1="1462.06" y1="342.3" x2="1462.06" y2="515.3" stroke="rgba(0,0,0,0.1)" stroke-width="1"/><line x1="1522.12" y1="342.3" x2="1522.12" y2="515.3" stroke="rgba(0,0,0,0.1)" stroke-width="1"/><line x1="1582.18" y1="342.3" x2="1582.18" y2="515.3" stroke="rgba(0,0,0,0.1)" stroke-width="1"/><line x1="1642.24" y1="342.3" x2="1642.24" y2="515.3" stroke="rgba(0,0,0,0.1)" stroke-width="1"/><line x1="1702.30" y1="342.3" x2="1702.30" y2="515.3" stroke="rgba(0,0,0,0.1)" stroke-width="1"/><line x1="1762.36" y1="342.3" x2="1762.36" y2="515.3" stroke="rgba(0,0,0,0.1)" stroke-width="1"/><line x1="1822.42" y1="342.3" x2="1822.42" y2="515.3" stroke="rgba(0,0,0,0.1)" stroke-width="1"/><line x1="1882.48" y1="342.3" x2="1882.48" y2="515.3" stroke="rgba(0,0,0,0.1)" stroke-width="1"/><line x1="1101.70" y1="342.3" x2="1101.70" y2="515.3" stroke="rgba(0,0,0,0.25)" stroke-width="1"/><line x1="1095.2" y1="508.30" x2="1882.5" y2="508.30" stroke="rgba(0,0,0,0.25)" stroke-width="1"/><g font-family="Liberation Sans"><text x="1094.5" y="511.50" text-anchor="end" font-size="9" fill="#666">0</text><text x="1094.5" y="490.75" text-anchor="end" font-size="9" fill="#666">100</text><text x="1094.5" y="470.00" text-anchor="end" font-size="9" fill="#666">200</text><text x="1094.5" y="449.25" text-anchor="end" font-size="9" fill="#666">300</text><text x="1094.5" y="428.50" text-anchor="end" font-size="9" fill="#666">400</text><text x="1094.5" y="407.75" text-anchor="end" font-size="9" fill="#666">500</text><text x="1094.5" y="387.00" text-anchor="end" font-size="9" fill="#666">600</text><text x="1094.5" y="366.25" text-anchor="end" font-size="9" fill="#666">700</text><text x="1094.5" y="345.50" text-anchor="end" font-size="9" fill="#666">800</text><text x="1101.70" y="523.6" text-anchor="middle" font-size="9" fill="#666">1</text><text x="1161.76" y="523.6" text-anchor="middle" font-size="9" fill="#666">2</text><text x="1221.82" y="523.6" text-anchor="middle" font-size="9" fill="#666">3</text><text x="1281.88" y="523.6" text-anchor="middle" font-size="9" fill="#666">4</text><text x="1341.94" y="523.6" text-anchor="middle" font-size="9" fill="#666">5</text><text x="1402.00" y="523.6" text-anchor="middle" font-size="9" fill="#666">6</text><text x="1462.06" y="523.6" text-anchor="middle" font-size="9" fill="#666">7</text><text x="1522.12" y="523.6" text-anchor="middle" font-size="9" fill="#666">8</text><text x="1582.18" y="523.6" text-anchor="middle" font-size="9" fill="#666">9</text><text x="1642.24" y="523.6" text-anchor="middle" font-size="9" fill="#666">10</text><text x="1702.30" y="523.6" text-anchor="middle" font-size="9" fill="#666">11</text><text x="1762.36" y="523.6" text-anchor="middle" font-size="9" fill="#666">12</text><text x="1822.42" y="523.6" text-anchor="middle" font-size="9" fill="#666">13</text><text x="1882.48" y="523.6" text-anchor="middle" font-size="9" fill="#666">14</text></g><path d="M1101.70 477.18 C1125.72 439.82 1138.29 382.58 1161.76 383.80 C1186.34 385.07 1191.00 451.46 1221.82 483.40 C1239.05 501.26 1256.90 503.12 1281.88 508.30 C1304.95 508.30 1317.92 508.30 1341.94 508.30 C1365.96 508.30 1377.98 508.30 1402.00 508.30 C1426.02 508.30 1438.04 508.30 1462.06 508.30 C1486.08 508.30 1498.10 508.30 1522.12 508.30 C1546.14 508.30 1558.16 508.30 1582.18 508.30 C1606.20 508.30 1618.22 508.30 1642.24 508.30 C1666.26 508.30 1678.28 508.30 1702.30 508.30 C1726.32 508.30 1738.34 508.30 1762.36 508.30 C1786.38 508.30 1798.40 508.30 1822.42 508.30 C1846.44 508.30 1858.46 508.30 1882.48 508.30 L1882.48 508.30 L1101.70 508.30 Z" fill="rgba(255,159,64,0.25)"/><path d="M1101.70 477.18 C1125.72 439.82 1138.29 382.58 1161.76 383.80 C1186.34 385.07 1191.00 451.46 1221.82 483.40 C1239.05 501.26 1256.90 503.12 1281.88 508.30 C1304.95 508.30 1317.92 508.30 1341.94 508.30 C1365.96 508.30 1377.98 508.30 1402.00 508.30 C1426.02 508.30 1438.04 508.30 1462.06 508.30 C1486.08 508.30 1498.10 508.30 1522.12 508.30 C1546.14 508.30 1558.16 508.30 1582.18 508.30 C1606.20 508.30 1618.22 508.30 1642.24 508.30 C1666.26 508.30 1678.28 508.30 1702.30 508.30 C1726.32 508.30 1738.34 508.30 1762.36 508.30 C1786.38 508.30 1798.40 508.30 1822.42 508.30 C1846.44 508.30 1858.46 508.30 1882.48 508.30" fill="none" stroke="rgb(255,159,64)" stroke-width="1"/><circle cx="1101.70" cy="477.18" r="2.4" fill="rgba(255,159,64,0.25)" stroke="rgb(255,159,64)" stroke-width="1"/><circle cx="1161.76" cy="383.80" r="2.4" fill="rgba(255,159,64,0.25)" stroke="rgb(255,159,64)" stroke-width="1"/><circle cx="1221.82" cy="483.40" r="2.4" fill="rgba(255,159,64,0.25)" stroke="rgb(255,159,64)" stroke-width="1"/><circle cx="1281.88" cy="508.30" r="2.4" fill="rgba(255,159,64,0.25)" stroke="rgb(255,159,64)" stroke-width="1"/><circle cx="1341.94" cy="508.30" r="2.4" fill="rgba(255,159,64,0.25)" stroke="rgb(255,159,64)" stroke-width="1"/><circle cx="1402.00" cy="508.30" r="2.4" fill="rgba(255,159,64,0.25)" stroke="rgb(255,159,64)" stroke-width="1"/><circle cx="1462.06" cy="508.30" r="2.4" fill="rgba(255,159,64,0.25)" stroke="rgb(255,159,64)" stroke-width="1"/><circle cx="1522.12" cy="508.30" r="2.4" fill="rgba(255,159,64,0.25)" stroke="rgb(255,159,64)" stroke-width="1"/><circle cx="1582.18" cy="508.30" r="2.4" fill="rgba(255,159,64,0.25)" stroke="rgb(255,159,64)" stroke-width="1"/><circle cx="1642.24" cy="508.30" r="2.4" fill="rgba(255,159,64,0.25)" stroke="rgb(255,159,64)" stroke-width="1"/><circle cx="1702.30" cy="508.30" r="2.4" fill="rgba(255,159,64,0.25)" stroke="rgb(255,159,64)" stroke-width="1"/><circle cx="1762.36" cy="508.30" r="2.4" fill="rgba(255,159,64,0.25)" stroke="rgb(255,159,64)" stroke-width="1"/><circle cx="1822.42" cy="508.30" r="2.4" fill="rgba(255,159,64,0.25)" stroke="rgb(255,159,64)" stroke-width="1"/><circle cx="1882.48" cy="508.30" r="2.4" fill="rgba(255,159,64,0.25)" stroke="rgb(255,159,64)" stroke-width="1"/><path d="M1101.70 508.30 C1125.72 441.90 1137.74 342.30 1161.76 342.30 C1185.78 342.30 1185.97 458.76 1221.82 508.30 C1234.02 508.30 1257.86 508.30 1281.88 508.30 C1305.90 508.30 1317.92 508.30 1341.94 508.30 C1365.96 508.30 1377.98 508.30 1402.00 508.30 C1426.02 508.30 1446.79 508.30 1462.06 508.30 C1494.84 477.15 1498.10 394.18 1522.12 394.18 C1546.14 394.18 1549.40 477.15 1582.18 508.30 C1597.45 508.30 1618.22 508.30 1642.24 508.30 C1666.26 508.30 1678.28 508.30 1702.30 508.30 C1726.32 508.30 1738.34 508.30 1762.36 508.30 C1786.38 508.30 1798.40 508.30 1822.42 508.30 C1846.44 508.30 1858.46 508.30 1882.48 508.30 L1882.48 508.30 L1101.70 508.30 Z" fill="rgba(75,192,192,0.22)"/><path d="M1101.70 508.30 C1125.72 441.90 1137.74 342.30 1161.76 342.30 C1185.78 342.30 1185.97 458.76 1221.82 508.30 C1234.02 508.30 1257.86 508.30 1281.88 508.30 C1305.90 508.30 1317.92 508.30 1341.94 508.30 C1365.96 508.30 1377.98 508.30 1402.00 508.30 C1426.02 508.30 1446.79 508.30 1462.06 508.30 C1494.84 477.15 1498.10 394.18 1522.12 394.18 C1546.14 394.18 1549.40 477.15 1582.18 508.30 C1597.45 508.30 1618.22 508.30 1642.24 508.30 C1666.26 508.30 1678.28 508.30 1702.30 508.30 C1726.32 508.30 1738.34 508.30 1762.36 508.30 C1786.38 508.30 1798.40 508.30 1822.42 508.30 C1846.44 508.30 1858.46 508.30 1882.48 508.30" fill="none" stroke="rgb(75,192,192)" stroke-width="1"/><circle cx="1101.70" cy="508.30" r="2.4" fill="rgba(75,192,192,0.22)" stroke="rgb(75,192,192)" stroke-width="1"/><circle cx="1161.76" cy="342.30" r="2.4" fill="rgba(75,192,192,0.22)" stroke="rgb(75,192,192)" stroke-width="1"/><circle cx="1221.82" cy="508.30" r="2.4" fill="rgba(75,192,192,0.22)" stroke="rgb(75,192,192)" stroke-width="1"/><circle cx="1281.88" cy="508.30" r="2.4" fill="rgba(75,192,192,0.22)" stroke="rgb(75,192,192)" stroke-width="1"/><circle cx="1341.94" cy="508.30" r="2.4" fill="rgba(75,192,192,0.22)" stroke="rgb(75,192,192)" stroke-width="1"/><circle cx="1402.00" cy="508.30" r="2.4" fill="rgba(75,192,192,0.22)" stroke="rgb(75,192,192)" stroke-width="1"/><circle cx="1462.06" cy="508.30" r="2.4" fill="rgba(75,192,192,0.22)" stroke="rgb(75,192,192)" stroke-width="1"/><circle cx="1522.12" cy="394.18" r="2.4" fill="rgba(75,192,192,0.22)" stroke="rgb(75,192,192)" stroke-width="1"/><circle cx="1582.18" cy="508.30" r="2.4" fill="rgba(75,192,192,0.22)" stroke="rgb(75,192,192)" stroke-width="1"/><circle cx="1642.24" cy="508.30" r="2.4" fill="rgba(75,192,192,0.22)" stroke="rgb(75,192,192)" stroke-width="1"/><circle cx="1702.30" cy="508.30" r="2.4" fill="rgba(75,192,192,0.22)" stroke="rgb(75,192,192)" stroke-width="1"/><circle cx="1762.36" cy="508.30" r="2.4" fill="rgba(75,192,192,0.22)" stroke="rgb(75,192,192)" stroke-width="1"/><circle cx="1822.42" cy="508.30" r="2.4" fill="rgba(75,192,192,0.22)" stroke="rgb(75,192,192)" stroke-width="1"/><circle cx="1882.48" cy="508.30" r="2.4" fill="rgba(75,192,192,0.22)" stroke="rgb(75,192,192)" stroke-width="1"/><rect x="1416.5" y="325.5" width="30.5" height="9" fill="rgba(75,192,192,0.2)" stroke="rgb(75,192,192)" stroke-width="1"/><text x="1451.5" y="333.3" font-size="9" fill="#666" font-family="Liberation Sans">Loja01</text><rect x="1485.5" y="325.5" width="30.5" height="9" fill="rgba(255,159,64,0.2)" stroke="rgb(255,159,64)" stroke-width="1"/><text x="1520.5" y="333.3" font-size="9" fill="#666" font-family="Liberation Sans">Loja02</text></svg>
</body></html>
